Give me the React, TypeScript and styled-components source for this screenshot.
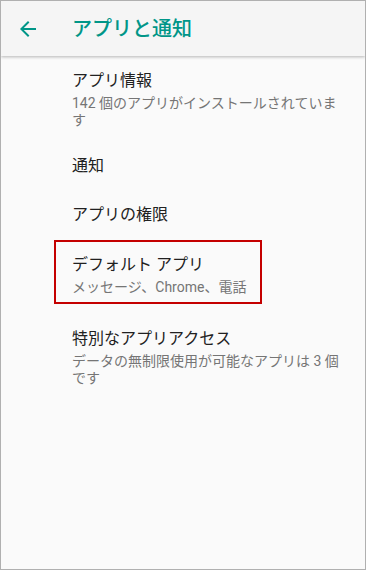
import React from "react";
import styled, { createGlobalStyle } from "styled-components";

const Global = createGlobalStyle`
  html, body { margin: 0; padding: 0; background: #fafafa; }
  * { box-sizing: border-box; }
`;

const Frame = styled.div`
  width: 366px;
  height: 570px;
  border: 1px solid #b0b0b0;
  background: #fafafa;
  font-family: Roboto, "Noto Sans CJK JP", "Noto Sans", sans-serif;
  overflow: hidden;
  display: flex;
  flex-direction: column;
`;

const Header = styled.header`
  height: 55px;
  flex: none;
  background: #f5f5f5;
  display: flex;
  align-items: center;
  box-shadow: 0 1px 3px rgba(0, 0, 0, 0.28);
  position: relative;
  z-index: 1;
`;

const BackButton = styled.div`
  width: 24px;
  height: 24px;
  margin-left: 15px;
  display: flex;
  color: #009688;
`;

const Title = styled.h1`
  margin: 0 0 0 32px;
  font-size: 20px;
  line-height: 24px;
  font-weight: 500;
  color: #009688;
`;

const List = styled.div`
  display: flex;
  flex-direction: column;
  padding-top: 2px;
`;

const Item = styled.div<{ $min: number; $pt?: number }>`
  position: relative;
  min-height: ${(p) => p.$min}px;
  padding: ${(p) => p.$pt ?? 12}px 16px 12px 71px;
  display: flex;
  flex-direction: column;
  justify-content: center;
`;

const ItemTitle = styled.div`
  font-size: 16px;
  line-height: 22px;
  color: #212121;
`;

const ItemSub = styled.div`
  margin-top: 3px;
  font-size: 14px;
  line-height: 17px;
  color: #757575;
`;

const Highlight = styled.div`
  position: absolute;
  left: 53px;
  top: 1px;
  width: 208px;
  height: 64px;
  border: 2px solid #c40000;
  pointer-events: none;
`;

const ArrowBack = () => (
  <svg width="24" height="24" viewBox="0 0 24 24" fill="currentColor">
    <path d="M20 11H7.83l5.59-5.59L12 4l-8 8 8 8 1.41-1.41L7.83 13H20v-2z" />
  </svg>
);

export default function App() {
  return (
    <>
      <Global />
      <Frame>
        <Header>
          <BackButton>
            <ArrowBack />
          </BackButton>
          <Title>アプリと通知</Title>
        </Header>
        <List>
          <Item $min={48}>
            <ItemTitle>アプリ情報</ItemTitle>
            <ItemSub>142 個のアプリがインストールされています</ItemSub>
          </Item>
          <Item $min={49}>
            <ItemTitle>通知</ItemTitle>
          </Item>
          <Item $min={49}>
            <ItemTitle>アプリの権限</ItemTitle>
          </Item>
          <Item $min={72}>
            <ItemTitle>デフォルト アプリ</ItemTitle>
            <ItemSub>メッセージ、Chrome、電話</ItemSub>
            <Highlight />
          </Item>
          <Item $min={48} $pt={17}>
            <ItemTitle>特別なアプリアクセス</ItemTitle>
            <ItemSub>データの無制限使用が可能なアプリは 3 個です</ItemSub>
          </Item>
        </List>
      </Frame>
    </>
  );
}
